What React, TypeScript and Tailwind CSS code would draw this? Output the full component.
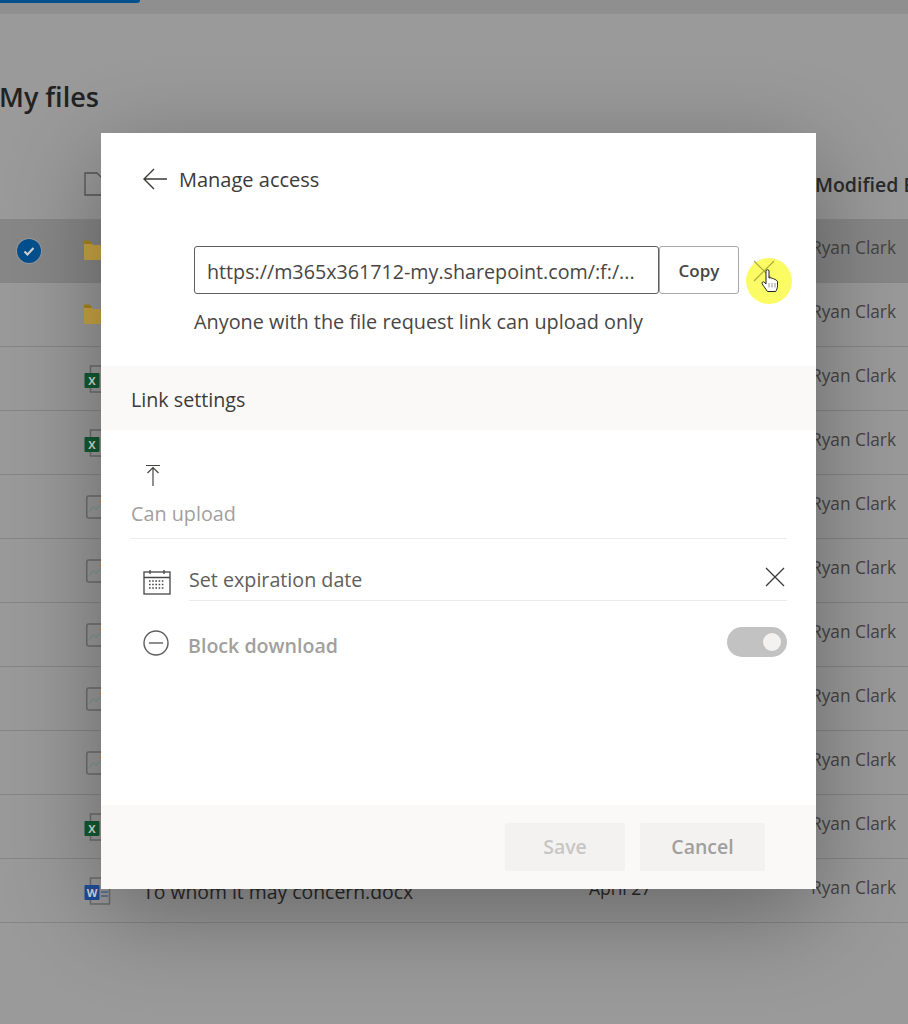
const sans = 'font-["Open_Sans","Noto_Sans",sans-serif]';

type FileKind = 'folder' | 'excel' | 'image' | 'word';

const rows: { kind: FileKind; selected?: boolean; name?: string; date?: string }[] = [
  { kind: 'folder', selected: true },
  { kind: 'folder' },
  { kind: 'excel' },
  { kind: 'excel' },
  { kind: 'image' },
  { kind: 'image' },
  { kind: 'image' },
  { kind: 'image' },
  { kind: 'image' },
  { kind: 'excel' },
  { kind: 'word', name: 'To whom it may concern.docx', date: 'April 27' },
];

function FileIcon({ kind }: { kind: FileKind }) {
  if (kind === 'folder') {
    return (
      <svg width="20" height="21" viewBox="0 0 20 21">
        <path d="M0 4a1 1 0 0 1 1-1h6l2 2h10a1 1 0 0 1 1 1v13a1 1 0 0 1-1 1H1a1 1 0 0 1-1-1z" fill="#c9a544" />
        <path d="M0 1.500a1 1 0 0 1 1-1h5l2 3.500H0z" fill="#a98521" />
      </svg>
    );
  }
  if (kind === 'image') {
    return (
      <svg width="24" height="24" viewBox="0 0 24 24" className="ml-[2px]">
        <rect x="0.750" y="1" width="21" height="22" rx="2" fill="none" stroke="#6e6e6e" strokeWidth="1.500" />
        <path d="M3 17l4-5 3 2.500 5-5" fill="none" stroke="#7f9a94" strokeWidth="1.300" />
        <circle cx="15" cy="6" r="1.500" fill="#c88a3c" />
      </svg>
    );
  }
  const word = kind === 'word';
  return (
    <svg width="28" height="28" viewBox="0 0 28 28">
      <path d="M6.500 1h14l5 5v21h-19z" fill="none" stroke="#6e6e6e" strokeWidth="1.500" />
      <path d="M17 11h7M17 15h7M17 19h7" stroke={word ? '#264f96' : '#4f7a5d'} strokeWidth="1.200" />
      <rect x="0.500" y="8" width="15" height="15" rx="1" fill={word ? '#1f4e9c' : '#135a33'} />
      <text x="8" y="20" textAnchor="middle" fontSize="11" fontWeight="700" fill="#d8d8d8" fontFamily="Open Sans">
        {word ? 'W' : 'X'}
      </text>
    </svg>
  );
}

function FileList() {
  return (
    <div className="flex flex-col">
      <div className="h-[14px] w-full bg-[#8f8f8f]">
        <div className="h-[3px] w-[140px] rounded-br-sm bg-[#03508f]" />
      </div>
      <h1 className="ml-[-1px] mt-[63px] h-[40px] text-[27px] font-semibold leading-[40px] text-[#222222]">My files</h1>
      <div className="mt-[25px] flex h-[77px] items-center pl-[84px] pt-[8px]">
        <svg width="20" height="24" viewBox="0 0 20 24" className="mt-[-2px]">
          <path d="M1 1h12l6 6v16H1z" fill="none" stroke="#555555" strokeWidth="1.300" />
        </svg>
        <span className="ml-auto mr-[-40px] w-[133px] text-[19.500px] font-semibold text-[#2a2a2a]">Modified By</span>
      </div>
      {rows.map((row, i) => (
        <div
          key={i}
          className={`flex h-[64px] items-center border-b border-[#868686] ${row.selected ? 'bg-[#878787]' : ''}`}
        >
          <div className="flex w-[84px] justify-center">
            {row.selected && (
              <span className="mr-[27px] flex h-[24px] w-[24px] items-center justify-center rounded-full bg-[#03508f] ring-1 ring-[#999999]">
                <svg width="14" height="14" viewBox="0 0 14 14">
                  <path d="M2.500 7.500l3 3 6-6.500" fill="none" stroke="#d6d6d6" strokeWidth="2" />
                </svg>
              </span>
            )}
          </div>
          <div className="flex w-[58px] items-center">
            <FileIcon kind={row.kind} />
          </div>
          <span className="mt-[2px] w-[447px] pl-[1px] text-[19.400px] text-[#2a2a2a]">{row.name}</span>
          <span className="mb-[5px] w-[223px] text-[17.500px] text-[#2a2a2a]">{row.date}</span>
          <span className="mb-[5px] ml-[-1px] text-[17.300px] text-[#444444]">Ryan Clark</span>
        </div>
      ))}
    </div>
  );
}

function Toggle() {
  return (
    <div className="flex h-[30px] w-[60px] items-center justify-end rounded-full bg-[#c2c2c2] pr-[6px]">
      <div className="h-[18px] w-[18px] rounded-full bg-[#f3f2f1]" />
    </div>
  );
}

function ManageAccess() {
  return (
    <div className="absolute left-[101px] top-[133px] flex h-[756px] w-[715px] flex-col bg-white shadow-[0_25px_90px_rgba(0,0,0,0.33)]">
      <div className="flex h-[92px] items-center pl-[42px] pt-[1px]">
        <svg width="24" height="22" viewBox="0 0 24 22" className="mt-[-2px]">
          <path d="M24 11H1.500M11 1L1 11l10 10" fill="none" stroke="#3b3a39" strokeWidth="1.400" />
        </svg>
        <span className="ml-[12px] text-[20px] text-[#3b3a39]">Manage access</span>
      </div>

      <div className="relative h-[141px] pl-[93px] pt-[21px]">
        <div className="flex h-[48px]">
          <div className="flex w-[465px] items-center rounded-[3px] border border-[#605e5c] pl-[12px] pt-[3px] text-[19.700px] text-[#484644]">
            https://m365x361712-my.sharepoint.com/:f:/...
          </div>
          <button className="flex w-[80px] items-center justify-center rounded-[3px] border border-[#a8a8a8] pt-[2px] text-[17px] font-semibold text-[#484644]">
            Copy
          </button>
        </div>
        <p className="mt-[14px] text-[19.850px] leading-[28px] text-[#484644]">
          Anyone with the file request link can upload only
        </p>
        {/* cursor highlight */}
        <div className="absolute left-[645px] top-[33px] h-[46px] w-[46px] rounded-full bg-[#fbfb66]" />
        <svg width="22" height="22" viewBox="0 0 22 22" className="absolute left-[652px] top-[35px]">
          <path d="M1 1l20 20M21 1L1 21" stroke="#a9a838" strokeWidth="1.100" />
        </svg>
        <svg width="18" height="24" viewBox="0 0 18 24" className="absolute left-[660px] top-[44px]">
          <path
            d="M5 2.200a1.500 1.500 0 0 1 3 0V9l1.200-.3c.9-.1 1.500.3 1.700.9.900-.4 1.900-.1 2.200.7 1-.3 1.900.2 2.100 1.200.9 0 1.300.6 1.300 1.500v3.500c0 2.500-.9 4.500-1.800 6H6.500C5.300 20.800 2.400 17 1.200 14.800c-.7-1.400.8-2.600 2-1.700L5 15z"
            fill="#ffffff"
            stroke="#222222"
            strokeWidth="1"
          />
          <path d="M8 14v4.500M11 14v4.500M14 14v4.500" stroke="#8a8a8a" strokeWidth="0.900" />
        </svg>
      </div>

      <div className="flex h-[64px] items-center bg-[#faf9f8] pl-[30px] pt-[3px] text-[19.700px] text-[#3b3a39]">
        Link settings
      </div>

      <div className="flex-1 pl-[30px] pr-[29px]">
        <div className="flex h-[109px] flex-col border-b border-[#edebe9] pt-[33px]">
          <svg width="16" height="24" viewBox="0 0 16 24" className="ml-[14px]">
            <path d="M1 2.500h14M8 23V4M2.500 10L8 4.500l5.500 5.500" fill="none" stroke="#484644" strokeWidth="1.200" />
          </svg>
          <span className="mt-[13px] text-[19.800px] leading-[28px] text-[#a19f9d]">Can upload</span>
        </div>

        <div className="flex h-[62px] items-center">
          <svg width="28" height="26" viewBox="0 0 28 26" className="ml-[12px] mt-[24px] shrink-0">
            <rect x="1" y="3" width="26" height="22" fill="none" stroke="#484644" strokeWidth="1.300" />
            <path d="M1 8.500h26M7 1v4M21 1v4" stroke="#484644" strokeWidth="1.300" />
            <path
              d="M6 12h16M6 15.500h16M6 19h16"
              stroke="#484644"
              strokeWidth="1.600"
              strokeDasharray="1.600 1.600"
            />
          </svg>
          <div className="ml-[18px] flex h-full flex-1 items-center justify-between border-b border-[#edebe9] pt-[20px]">
            <span className="text-[19.700px] text-[#605e5c]">Set expiration date</span>
            <svg width="20" height="20" viewBox="0 0 20 20" className="mr-[2px] mb-[6px]">
              <path d="M1 1l18 18M19 1L1 19" stroke="#3b3a39" strokeWidth="1.300" />
            </svg>
          </div>
        </div>

        <div className="flex h-[89px] items-center pb-[1px]">
          <svg width="26" height="26" viewBox="0 0 26 26" className="mb-[4px] ml-[12px] shrink-0">
            <circle cx="13" cy="13" r="12" fill="none" stroke="#605e5c" strokeWidth="1.400" />
            <path d="M6 13h14" stroke="#605e5c" strokeWidth="1.400" />
          </svg>
          <span className="ml-[19px] mt-[2px] text-[19.600px] font-semibold text-[#a19f9d]">Block download</span>
          <div className="mb-[7px] ml-auto">
            <Toggle />
          </div>
        </div>
      </div>

      <div className="flex h-[84px] items-start justify-end gap-[15px] bg-[#faf9f8] pr-[51px] pt-[18px]">
        <button className="flex h-[48px] w-[120px] items-center justify-center rounded-[2px] bg-[#f3f2f1] text-[19.500px] font-semibold text-[#c8c6c4]">
          Save
        </button>
        <button className="flex h-[48px] w-[125px] items-center justify-center rounded-[2px] bg-[#f3f2f1] text-[19.500px] font-semibold text-[#a19f9d]">
          Cancel
        </button>
      </div>
    </div>
  );
}

export default function App() {
  return (
    <div className={`relative h-[1024px] w-[908px] overflow-hidden bg-[#9a9a9a] ${sans}`}>
      <FileList />
      <ManageAccess />
    </div>
  );
}
